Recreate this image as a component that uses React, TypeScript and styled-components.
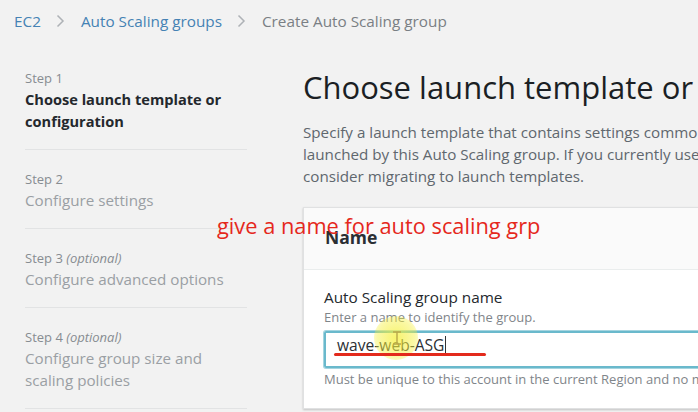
import React from "react";
import styled, { createGlobalStyle } from "styled-components";

const Global = createGlobalStyle`
  html, body { margin: 0; padding: 0; }
  body {
    background: #f2f2f2;
    font-family: "Open Sans", "Noto Sans", sans-serif;
    width: 698px;
    height: 412px;
    overflow: hidden;
  }
`;

const Page = styled.div`
  position: relative;
  width: 698px;
  height: 412px;
  overflow: hidden;
`;

const Breadcrumbs = styled.nav`
  display: flex;
  align-items: center;
  height: 42px;
  padding-left: 14px;
  font-size: 15.3px;
`;

const Crumb = styled.span<{ $link?: boolean }>`
  color: ${(p) => (p.$link ? "#4582b4" : "#7a7f84")};
`;

const Chevron = styled.span`
  display: inline-flex;
  width: 40px;
  justify-content: center;
  color: #a9adb1;
`;

const Body = styled.div`
  display: grid;
  grid-template-columns: 222px 1fr;
  column-gap: 56px;
  padding-left: 25px;
  padding-top: 24px;
`;

const Steps = styled.ol`
  list-style: none;
  margin: 0;
  padding: 0;
`;

const Step = styled.li`
  padding: 2px 0 17px;
  margin-bottom: 17px;
  border-bottom: 1px solid #e2e3e4;
`;

const StepLabel = styled.div`
  font-size: 13px;
  line-height: 20px;
  color: #878c91;
  em { font-style: italic; }
`;

const StepTitle = styled.div<{ $active?: boolean }>`
  font-size: ${(p) => (p.$active ? "14.6px" : "15.2px")};
  line-height: 22px;
  font-weight: ${(p) => (p.$active ? 700 : 400)};
  color: ${(p) => (p.$active ? "#24282d" : "#9a9fa4")};
`;

const Main = styled.main`
  width: 640px;
`;

const Title = styled.h1`
  margin: 1px 0 0;
  font-size: 31px;
  line-height: 40px;
  font-weight: 400;
  color: #1b1f24;
  white-space: nowrap;
`;

const Lead = styled.p`
  margin: 14px 0 0;
  font-size: 15.2px;
  line-height: 22px;
  color: #60676e;
  width: 640px;
`;

const Card = styled.section`
  margin-top: 20px;
  background: #fff;
  border: 1px solid #e0e1e2;
  box-shadow: 0 1px 2px rgba(0, 0, 0, 0.2);
  width: 600px;
`;

const CardHeader = styled.header`
  background: #fafafa;
  height: 62px;
  display: flex;
  align-items: center;
  padding: 0 0 3px 21px;
  box-sizing: border-box;
  border-bottom: 1px solid #eaeded;
  font-size: 17.5px;
  font-weight: 700;
  color: #2b2f34;
`;

const CardBody = styled.div`
  padding: 16px 20px 20px;
`;

const FieldLabel = styled.div`
  font-size: 15.3px;
  line-height: 22px;
  color: #24282d;
`;

const FieldHint = styled.div`
  font-size: 13px;
  line-height: 18px;
  color: #7f858a;
`;

const InputBox = styled.div`
  margin-top: 5px;
  box-sizing: content-box;
  border: 2px solid #6ab9cc;
  border-radius: 2px;
  display: flex;
  align-items: center;
  padding: 0 0 9px 11px;
  height: 24px;
  font-size: 15.6px;
  line-height: 20px;
  color: #2b2f34;
  box-shadow: 0 0 0 1px #a5d5e0;
`;

const Caret = styled.span`
  display: inline-block;
  width: 1px;
  height: 18px;
  background: #333;
  margin-left: 1px;
`;

const Constraint = styled.div`
  margin-top: 2px;
  font-size: 13px;
  line-height: 18px;
  color: #7f858a;
  white-space: nowrap;
`;

const Annotation = styled.div`
  position: absolute;
  left: 217px;
  top: 211px;
  font-family: "Open Sans", "Noto Sans", sans-serif;
  font-size: 21.8px;
  line-height: 30px;
  color: #e5281c;
  white-space: nowrap;
`;

const Underline = styled.div`
  position: absolute;
  left: 334px;
  top: 353px;
  width: 152px;
  height: 3px;
  border-radius: 2px;
  background: #e32a1c;
`;

const Highlight = styled.div`
  position: absolute;
  left: 374px;
  top: 316px;
  width: 44px;
  height: 44px;
  border-radius: 50%;
  background: radial-gradient(circle, rgba(245, 240, 60, 0.75) 0%, rgba(245, 240, 60, 0.45) 60%, rgba(245, 240, 60, 0) 100%);
  pointer-events: none;
`;

const IBeam = styled.svg`
  position: absolute;
  left: 392px;
  top: 331px;
`;

const ChevronIcon = () => (
  <svg width="9" height="14" viewBox="0 0 9 14">
    <path d="M1.5 1.5 7 7 1.5 12.5" fill="none" stroke="#aeb2b6" strokeWidth="1.5" />
  </svg>
);

export default function App() {
  return (
    <Page>
      <Global />
      <Breadcrumbs>
        <Crumb $link>EC2</Crumb>
        <Chevron>
          <ChevronIcon />
        </Chevron>
        <Crumb $link>Auto Scaling groups</Crumb>
        <Chevron>
          <ChevronIcon />
        </Chevron>
        <Crumb>Create Auto Scaling group</Crumb>
      </Breadcrumbs>
      <Body>
        <Steps>
          <Step>
            <StepLabel>Step 1</StepLabel>
            <StepTitle $active>Choose launch template or configuration</StepTitle>
          </Step>
          <Step>
            <StepLabel>Step 2</StepLabel>
            <StepTitle>Configure settings</StepTitle>
          </Step>
          <Step>
            <StepLabel>
              Step 3 <em>(optional)</em>
            </StepLabel>
            <StepTitle>Configure advanced options</StepTitle>
          </Step>
          <Step>
            <StepLabel>
              Step 4 <em>(optional)</em>
            </StepLabel>
            <StepTitle>Configure group size and scaling policies</StepTitle>
          </Step>
        </Steps>
        <Main>
          <Title>Choose launch template or configuration</Title>
          <Lead>
            Specify a launch template that contains settings common to all EC2 instances that are
            launched by this Auto Scaling group. If you currently use launch configurations, you
            might consider migrating to launch templates.
          </Lead>
          <Card>
            <CardHeader>Name</CardHeader>
            <CardBody>
              <FieldLabel>Auto Scaling group name</FieldLabel>
              <FieldHint>Enter a name to identify the group.</FieldHint>
              <InputBox>
                wave-web-ASG
                <Caret />
              </InputBox>
              <Constraint>
                Must be unique to this account in the current Region and no more than 255 characters.
              </Constraint>
            </CardBody>
          </Card>
        </Main>
      </Body>
      <Highlight />
      <IBeam width="10" height="14" viewBox="0 0 10 14">
        <path d="M1 1h8M5 1v12M1 13h8" stroke="#b9a84a" strokeWidth="1.4" fill="none" />
      </IBeam>
      <Underline />
      <Annotation>give a name for auto scaling grp</Annotation>
    </Page>
  );
}
